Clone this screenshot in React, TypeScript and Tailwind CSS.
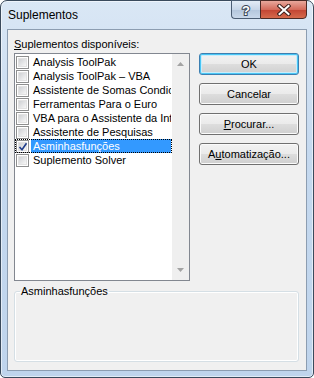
import React from 'react';

const items = [
    'Analysis ToolPak',
    'Analysis ToolPak – VBA',
    'Assistente de Somas Condicionais',
    'Ferramentas Para o Euro',
    'VBA para o Assistente da Internet',
    'Assistente de Pesquisas',
    'Asminhasfunções',
    'Suplemento Solver',
];

const font = "font-['Liberation_Sans',Arial,sans-serif]";

const Check = ({ checked }: { checked: boolean }) => {
    return (
        <span className="w-[13px] h-[13px] shrink-0 border border-[#8e8f8f] bg-white p-[1px] flex">
            <span className="relative flex-1 bg-gradient-to-br from-[#cfd1d4] to-[#f7f7f7] border border-[#e2e2e2]">
                {checked && (
                    <svg className="absolute -left-[1px] -top-[1px]" width="10" height="10" viewBox="0 0 10 10">
                        <path d="M1.5 5 L4 7.8 L8.5 1.2" fill="none" stroke="#1f3d8a" strokeWidth="1.6" />
                    </svg>
                )}
            </span>
        </span>
    );
};

const Row = ({ label, selected, checked }: { label: string; selected?: boolean; checked?: boolean }) => {
    return (
        <div className={`flex items-center h-[14px] pl-[1px] pr-[1px] ${selected ? 'outline outline-1 outline-dotted outline-black -outline-offset-1' : ''}`}>
            <Check checked={!!checked} />
            <span
                className={`ml-[2px] flex-1 h-full px-[2px] leading-[14px] whitespace-nowrap overflow-hidden ${selected ? 'bg-[#3399ff] text-white' : 'text-black'}`}
            >
                {label}
            </span>
        </div>
    );
};

const Btn = ({ children, primary }: { children: React.ReactNode; primary?: boolean }) => {
    return (
        <div
            className={`h-[22px] rounded-[3px] border flex items-center justify-center text-[11px] text-black ${
                primary
                    ? 'border-[#3c7fb1] shadow-[inset_0_0_0_1px_#48c6f5,inset_0_0_0_2px_#c8ecfb]'
                    : 'border-[#707070] shadow-[inset_0_0_0_1px_#fbfbfb]'
            } bg-[linear-gradient(#f2f2f2_0%,#ebebeb_48%,#dddddd_52%,#cfcfcf_100%)]`}
        >
            {children}
        </div>
    );
};

const TitleButtons = () => {
    return (
        <div className="ml-auto mr-[6px] -mt-[1px] flex">
            <div className="w-[29px] h-[19px] border border-[#4b5d73] border-r-0 rounded-bl-[4px] bg-[linear-gradient(#e3ecf6,#c7d6e8_50%,#b3c6dc_51%,#c9d8ea)] flex items-center justify-center">
                <svg width="12" height="14" viewBox="0 0 12 14">
                    <text x="6" y="12" textAnchor="middle" fontFamily="Liberation Sans, Arial, sans-serif" fontWeight="bold" fontSize="13" fill="#ffffff" stroke="#3a4757" strokeWidth="2" paintOrder="stroke">?</text>
                </svg>
            </div>
            <div className="w-[47px] h-[19px] border border-[#4b2a25] rounded-br-[4px] bg-[linear-gradient(#e8a89c,#d46b5b_50%,#c24432_51%,#d56a4c)] flex items-center justify-center">
                <svg width="14" height="12" viewBox="0 0 14 12">
                    <path d="M2.5 2 L11.5 10 M11.5 2 L2.5 10" stroke="#3d1f1a" strokeWidth="4" strokeLinecap="square" />
                    <path d="M2.5 2 L11.5 10 M11.5 2 L2.5 10" stroke="#ffffff" strokeWidth="2" strokeLinecap="square" />
                </svg>
            </div>
        </div>
    );
};

export default function App() {
    return (
        <div className={`w-[314px] h-[378px] bg-white ${font}`}>
            <div className="w-full h-full flex flex-col border border-[#3a4a5c] rounded-t-[7px] rounded-b-[5px] bg-[linear-gradient(#dae7f5,#c5d9ef_40%,#bfd4ec)] shadow-[inset_0_0_0_1px_rgba(255,255,255,0.55)]">
                <div className="h-[28px] shrink-0 flex items-start">
                    <span className="pl-[7px] pt-[7px] text-[12px] leading-[14px] text-black">Suplementos</span>
                    <TitleButtons />
                </div>
                <div className="mx-[6px] flex-1 mb-[6px] border border-[#8c9db1] bg-[#f0f0f0] pl-[6px] pr-[7px] pt-[8px] flex flex-col text-[11px]">
                    <div className="flex gap-[9px]">
                        <div className="w-[176px] flex flex-col">
                            <div className="leading-[13px] h-[13px] text-black">
                                <span className="underline">S</span>uplementos disponíveis:
                            </div>
                            <div className="mt-[2px] h-[228px] border border-[#828790] bg-white flex">
                                <div className="flex-1 pt-[1px] flex flex-col min-w-0">
                                    {items.map((it, i) => (
                                        <Row key={it} label={it} selected={i === 6} checked={i === 6} />
                                    ))}
                                </div>
                                <div className="w-[17px] bg-[#efefef] flex flex-col items-center justify-between py-[8px]">
                                    <svg width="7" height="4" viewBox="0 0 7 4">
                                        <path d="M0 4 L3.5 0 L7 4 Z" fill="#a3a3a3" />
                                    </svg>
                                    <svg width="7" height="4" viewBox="0 0 7 4">
                                        <path d="M0 0 L7 0 L3.5 4 Z" fill="#a3a3a3" />
                                    </svg>
                                </div>
                            </div>
                        </div>
                        <div className="flex-1 pt-[15px] flex flex-col gap-[8px]">
                            <Btn primary>OK</Btn>
                            <Btn>Cancelar</Btn>
                            <Btn>
                                <span><span className="underline">P</span>rocurar...</span>
                            </Btn>
                            <Btn>
                                <span>A<span className="underline">u</span>tomatização...</span>
                            </Btn>
                        </div>
                    </div>
                    <fieldset className="mt-[4px] h-[77px] border border-[#d5dfe5] rounded-[3px] pl-[5px] shadow-[inset_0_0_0_1px_#ffffff]">
                        <legend className="px-[1px] leading-[13px] text-black">Asminhasfunções</legend>
                    </fieldset>
                </div>
            </div>
        </div>
    );
}
